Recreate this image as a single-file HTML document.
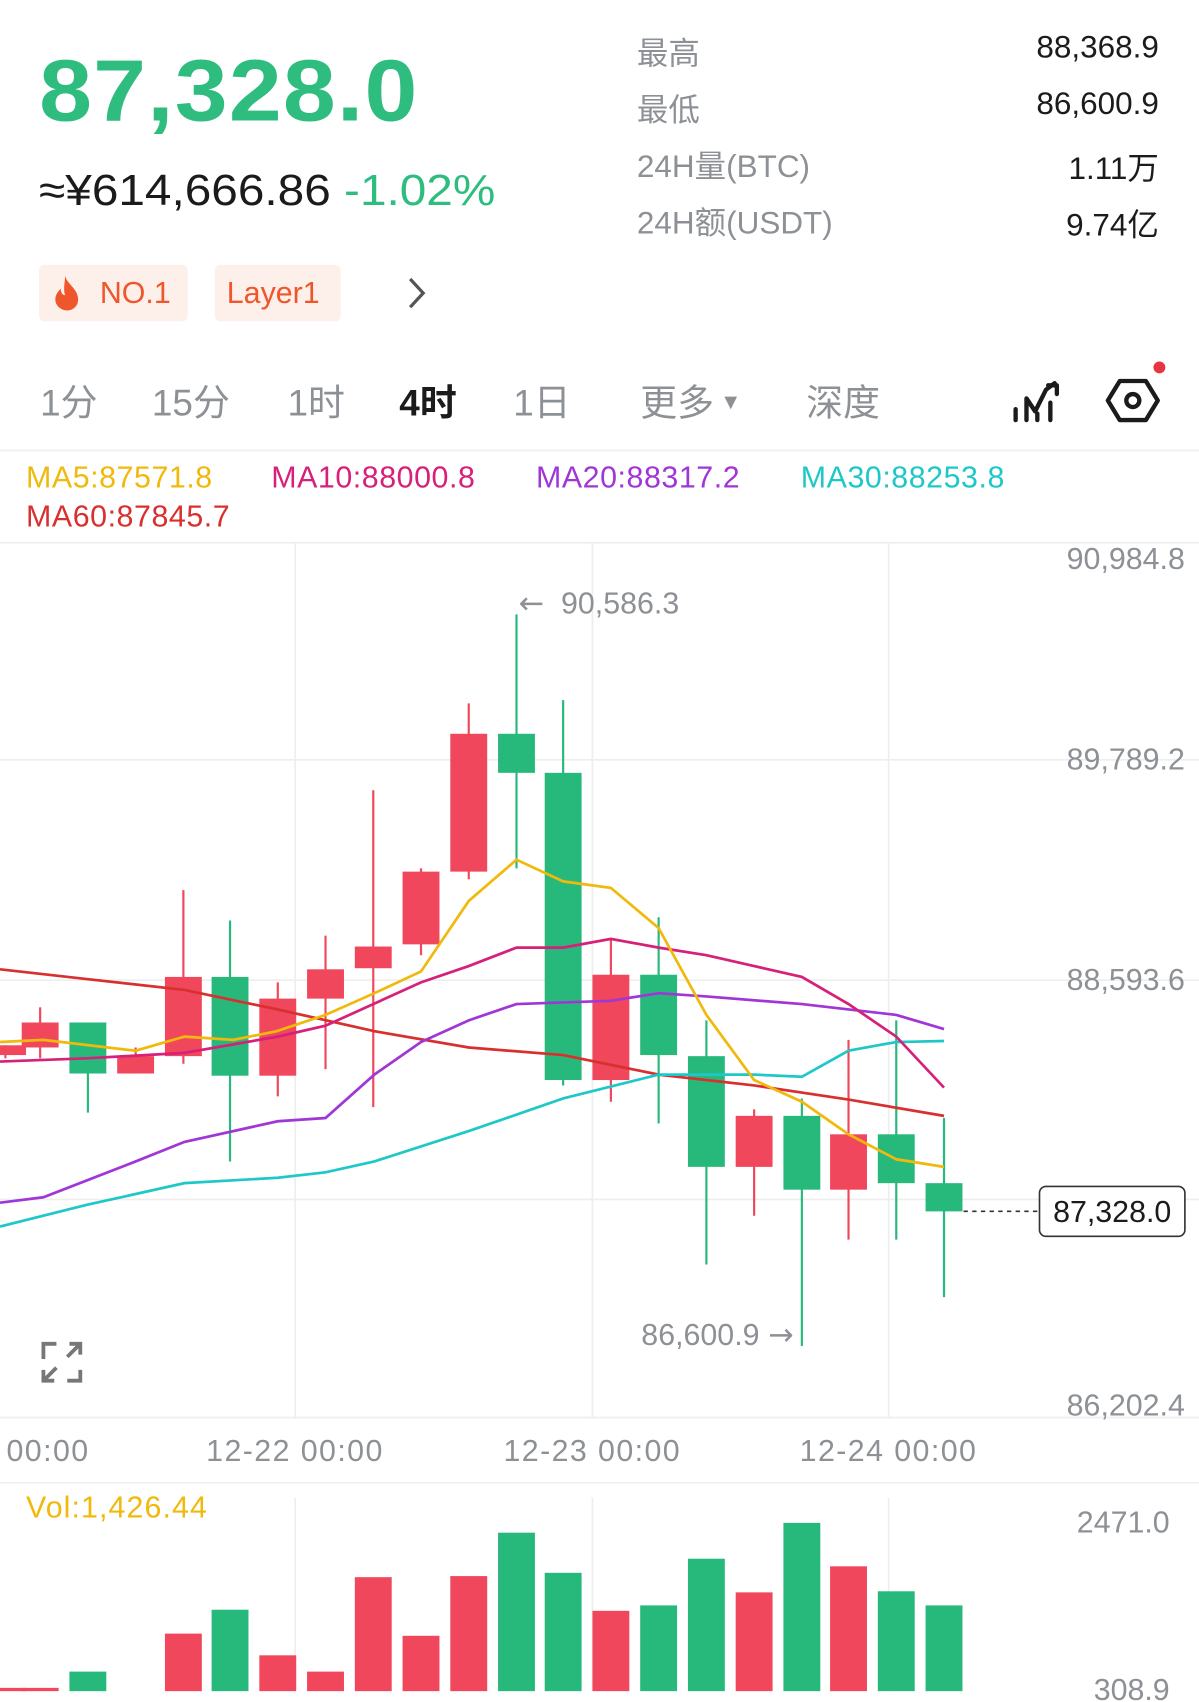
<!DOCTYPE html>
<html><head><meta charset="utf-8"><style>
html,body{margin:0;padding:0;background:#fff;overflow:hidden;width:1199px;height:1702px}
#w{position:absolute;left:0;top:0;width:1105px;height:1568px;transform:scale(1.08507,1.08546);transform-origin:0 0;font-family:"Liberation Sans","Noto Sans CJK SC",sans-serif}
.a{position:absolute;white-space:nowrap}
.g{color:#8d9196}
</style></head><body><div id="w">
<div class="a" style="left:36px;top:38px;font-size:80px;font-weight:bold;color:#2ebd7f;letter-spacing:1px;transform:scaleX(1.095);transform-origin:0 0">87,328.0</div>
<div class="a" style="left:36px;top:154px;font-size:40px;color:#1b1b1b;transform:scaleX(1.1);transform-origin:0 0">≈¥614,666.86 <span style="color:#2ebd7f">-1.02%</span></div>
<div class="a g" style="left:587px;top:26px;font-size:29px">最高</div>
<div class="a g" style="left:587px;top:78px;font-size:29px">最低</div>
<div class="a g" style="left:587px;top:130px;font-size:29px">24H量(BTC)</div>
<div class="a g" style="left:587px;top:182px;font-size:29px">24H额(USDT)</div>
<div class="a" style="right:37px;top:28px;font-size:29px;color:#1b1b1b">88,368.9</div>
<div class="a" style="right:37px;top:80px;font-size:29px;color:#1b1b1b">86,600.9</div>
<div class="a" style="right:37px;top:132px;font-size:29px;color:#1b1b1b">1.11万</div>
<div class="a" style="right:37px;top:184px;font-size:29px;color:#1b1b1b">9.74亿</div>
<div class="a" style="left:36px;top:244px;width:137px;height:52px;background:#fdefe9;border-radius:5px"></div>
<svg class="a" style="left:46px;top:252px" width="32" height="36" viewBox="0 0 32 36"><path d="M14 2C16 10 26 14 26 24c0 6-5 10-10 10S5 30 5 24c0-5 3-8 5-10 0 4 2 6 4 6-2-6 0-12 0-18z" fill="#f0562b"/></svg>
<div class="a" style="left:92px;top:254px;font-size:28px;color:#f0562b">NO.1</div>
<div class="a" style="left:198px;top:244px;width:116px;height:52px;background:#fdefe9;border-radius:5px"></div>
<div class="a" style="left:209px;top:254px;font-size:28px;color:#f0562b">Layer1</div>
<svg class="a" style="left:372px;top:254px" width="24" height="32"><path d="M6 3l12 13L6 29" stroke="#555" stroke-width="3" fill="none"/></svg>
<div class="a g" style="left:37px;top:344px;font-size:34px">1分</div>
<div class="a g" style="left:140px;top:344px;font-size:34px">15分</div>
<div class="a g" style="left:265px;top:344px;font-size:34px">1时</div>
<div class="a" style="left:368px;top:344px;font-size:34px;color:#1b1b1b;font-weight:bold">4时</div>
<div class="a g" style="left:473px;top:344px;font-size:34px">1日</div>
<div class="a g" style="left:590px;top:344px;font-size:34px">更多<span style="font-size:20px;vertical-align:6px"> ▼</span></div>
<div class="a g" style="left:743px;top:344px;font-size:34px">深度</div>
<svg class="a" style="left:930px;top:345px" width="50" height="50" viewBox="0 0 50 50"><path d="M6 42V32M16 42V22l8 12 10-20 8-6M26 42V36M38 42V26M36 10h8v8" stroke="#1b1b1b" stroke-width="4" fill="none" stroke-linecap="round" stroke-linejoin="round"/></svg>
<svg class="a" style="left:1018px;top:340px" width="60" height="60" viewBox="0 0 60 60"><path d="M14 11h24l11 18-11 18H14L3 29z" stroke="#1b1b1b" stroke-width="4" fill="none" stroke-linejoin="round"/><circle cx="26" cy="29" r="6" stroke="#1b1b1b" stroke-width="4" fill="none"/></svg>
<div class="a" style="left:1063px;top:333px;width:11px;height:11px;border-radius:50%;background:#e8343e"></div>
<div class="a" style="left:0;top:414px;width:1105px;height:2px;background:#f2f2f2"></div>
<div class="a" style="left:24px;top:424px;font-size:28px;color:#f0b90b;letter-spacing:0.5px">MA5:87571.8</div>
<div class="a" style="left:250px;top:424px;font-size:28px;color:#d6207a;letter-spacing:0.5px">MA10:88000.8</div>
<div class="a" style="left:494px;top:424px;font-size:28px;color:#a036d6;letter-spacing:0.5px">MA20:88317.2</div>
<div class="a" style="left:738px;top:424px;font-size:28px;color:#1fc8c8;letter-spacing:0.5px">MA30:88253.8</div>
<div class="a" style="left:24px;top:460px;font-size:28px;color:#d8302f;letter-spacing:0.5px">MA60:87845.7</div>
<svg class="a" style="left:0;top:0" width="1105" height="1568">
<g stroke="#eeeeee" stroke-width="1.5">
<line x1="0" y1="500" x2="1105" y2="500"/><line x1="0" y1="700" x2="1105" y2="700"/><line x1="0" y1="903" x2="1105" y2="903"/><line x1="0" y1="1105" x2="1105" y2="1105"/><line x1="0" y1="1306" x2="1105" y2="1306"/><line x1="0" y1="1366" x2="1105" y2="1366"/>
<line x1="272" y1="500" x2="272" y2="1306"/><line x1="546" y1="500" x2="546" y2="1306"/><line x1="819" y1="500" x2="819" y2="1306"/>
<line x1="272" y1="1380" x2="272" y2="1558"/><line x1="546" y1="1380" x2="546" y2="1558"/><line x1="819" y1="1380" x2="819" y2="1558"/>
</g>
<g id="c"></g>
<g fill="none" stroke-width="2.5">
<polyline stroke="#d8302f" points="0,893 80,902 170,912 256,930 345,950 432,965 519,972 607,990 695,1000 782,1013 870,1028"/>
<polyline stroke="#1fc8c8" points="0,1130 80,1110 170,1090 256,1085 300,1080 345,1070 432,1042 519,1012 607,990 651,990 695,990 739,992 782,968 826,960 870,959"/>
<polyline stroke="#a036d6" points="0,1108 40,1103 125,1070 170,1052 256,1033 300,1030 345,990 388,960 432,940 476,925 563,922 607,915 651,918 739,925 826,935 870,948"/>
<polyline stroke="#d6207a" points="0,978 80,975 170,970 256,955 300,945 388,905 432,890 476,873 519,873 563,865 607,873 651,880 695,890 739,900 782,925 826,955 870,1002"/>
<polyline stroke="#f0b90b" points="0,960 40,958 125,968 170,955 215,958 255,950 300,935 345,915 388,895 432,830 476,792 519,812 563,818 607,855 651,935 695,995 739,1015 782,1045 826,1068 870,1075"/>
</g>
<line x1="888" y1="1116" x2="958" y2="1116" stroke="#333" stroke-width="1.5" stroke-dasharray="4,4"/>
<rect x="958" y="1093" width="134" height="46" rx="6" fill="#fff" stroke="#333" stroke-width="1.5"/>
<text x="1025" y="1126" font-size="28" fill="#1b1b1b" text-anchor="middle" font-family="Liberation Sans">87,328.0</text>
<g fill="#8d9196" font-size="28" font-family="Liberation Sans" text-anchor="end">
<text x="1092" y="524">90,984.8</text><text x="1092" y="709">89,789.2</text><text x="1092" y="912">88,593.6</text><text x="1092" y="1304">86,202.4</text>
<text x="1078" y="1412">2471.0</text><text x="1078" y="1566">308.9</text>
<text x="626" y="565">90,586.3</text><text x="700" y="1239">86,600.9</text>
</g>
<text x="478" y="565" font-size="28" fill="#8d9196" font-family="DejaVu Sans">←</text>
<text x="708" y="1239" font-size="28" fill="#8d9196" font-family="DejaVu Sans">→</text>
<g fill="#8d9196" font-size="28" font-family="Liberation Sans" letter-spacing="1.3">
<text x="6" y="1346">00:00</text><text x="190" y="1346">12-22 00:00</text><text x="464" y="1346">12-23 00:00</text><text x="737" y="1346">12-24 00:00</text></g>
<text x="24" y="1398" font-size="28" fill="#f0b90b" font-family="Liberation Sans" letter-spacing="1">Vol:1,426.44</text>
<path d="M40 1252v-14h12M64 1238h10v10M74 1238l-12 12M40 1262v10h10M74 1262v10H62M40 1272l12-12" stroke="#777" stroke-width="3.5" fill="none"/>
</svg>
</div>
<script>
var R="#f0475c",G="#27b97c";
var d=[[5,'R',963,972,963,975],[37,'R',942,965,928,975],[81,'G',942,989,942,1025],[125,'R',973,989,965,989],[169,'R',900,973,820,980],[212,'G',900,991,848,1070],[256,'R',920,991,905,1010],[300,'R',893,920,862,985],[344,'R',872,892,728,1020],[388,'R',803,870,800,880],[432,'R',676,803,648,810],[476,'G',676,712,566,800],[519,'G',712,995,645,1000],[563,'R',898,995,865,1015],[607,'G',898,972,845,1035],[651,'G',973,1075,940,1165],[695,'R',1028,1075,1022,1120],[739,'G',1028,1096,1012,1240],[782,'R',1045,1096,958,1142],[826,'G',1045,1090,940,1142],[870,'G',1090,1116,1030,1195]];
var v=[1555,1555,1540,null,1505,1483,1525,1540,1453,1507,1452,1412,1449,1484,1479,1436,1467,1403,1443,1466,1479];
var s="";
d.forEach(function(c,i){var col=c[1]=='R'?R:G;var x=c[0]-17;if(i==0)x=-10;
s+='<line x1="'+c[0]+'" y1="'+c[4]+'" x2="'+c[0]+'" y2="'+c[5]+'" stroke="'+col+'" stroke-width="2"/>';
s+='<rect x="'+x+'" y="'+c[2]+'" width="34" height="'+Math.max(2,c[3]-c[2])+'" fill="'+col+'"/>';
if(v[i]!=null)s+='<rect x="'+x+'" y="'+v[i]+'" width="34" height="'+(1558-v[i])+'" fill="'+col+'"/>';});
document.getElementById('c').innerHTML=s;
</script>
</body></html>
